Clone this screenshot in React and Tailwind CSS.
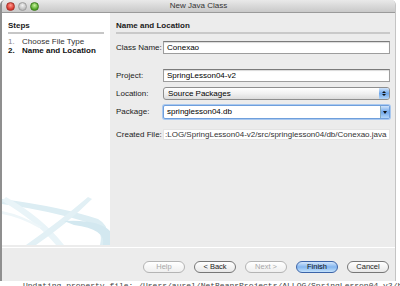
import React from "react";

const Field = ({ children, className = "" }) => (
  <div
    className={
      "h-[13px] flex items-center px-[3px] bg-white border border-[#9d9d9d] border-t-[#7b7b7b] shadow-[inset_0_1px_1px_rgba(0,0,0,0.15)] " +
      className
    }
  >
    {children}
  </div>
);

const Row = ({ label, children, className = "" }) => (
  <div className={"flex items-center " + className}>
    <div className="w-[47px] shrink-0 text-[#1a1a1a]">{label}</div>
    <div className="flex-1">{children}</div>
  </div>
);

const Btn = ({ children, disabled, primary }) => {
  let cls =
    "h-[12px] w-[42px] rounded-full flex items-center justify-center border text-[7.5px] ";
  if (primary)
    cls +=
      "border-[#3c64a8] bg-gradient-to-b from-[#d4e6fb] via-[#84b6ef] to-[#c4e2fb] text-[#111]";
  else if (disabled)
    cls += "border-[#b4b4b4] bg-gradient-to-b from-white to-[#efefef] text-[#a8a8a8]";
  else cls += "border-[#777] bg-gradient-to-b from-white to-[#e8e8e8] text-[#222]";
  return <div className={cls}>{children}</div>;
};

const Wave = () => (
  <svg width="108" height="48" viewBox="0 0 108 48" className="block">
    <path d="M0 2 Q60 10 96 22 Q110 30 104 48 L98 48 Q102 30 88 26 Q50 14 0 7 Z" fill="#dcedf3" />
    <path d="M4 0 Q40 20 62 48 L54 48 Q34 24 0 4 Z" fill="#e9f4f8" />
    <path d="M86 0 Q58 24 24 48 L34 48 Q66 26 90 2 Z" fill="#e2f0f5" />
    <path d="M62 24 Q96 22 108 34 L108 48 L101 48 Q104 32 72 28 Z" fill="#d3e8f0" />
    <path d="M74 34 Q92 31 96 40 L91 41 Q88 36 76 37 Z" fill="#ffffff" />
    <path d="M0 14 Q20 18 40 30 L37 31 Q18 20 0 17 Z" fill="#eef6f9" />
  </svg>
);

export default function App() {
  return (
    <div
      className="w-[400px] h-[286px] overflow-hidden bg-white text-[8px] leading-none"
      style={{ fontFamily: '"Liberation Sans", Arial, sans-serif' }}
    >
      <div className="w-[396px] h-[281px] flex flex-col rounded-t-[5px] overflow-hidden border-l-2 border-[#8f8f8f] bg-[#ececec] border-r border-r-[#c4c4c4]">
        {/* title bar */}
        <div className="h-[13px] shrink-0 flex items-center relative bg-gradient-to-b from-[#e9e9e9] to-[#c9c9c9] border-b border-[#9a9a9a]">
          <div className="flex gap-[3px] pl-[4px]">
            <div className="w-[9px] h-[9px] rounded-full bg-[radial-gradient(circle_at_50%_35%,#ff9a8e,#d8332a_70%)] border border-[#a3322a]" />
            <div className="w-[9px] h-[9px] rounded-full bg-[radial-gradient(circle_at_50%_35%,#f2f2f2,#bdbdbd_70%)] border border-[#9c9c9c]" />
            <div className="w-[9px] h-[9px] rounded-full bg-[radial-gradient(circle_at_50%_35%,#c8f29c,#4da423_70%)] border border-[#3f7d1f]" />
          </div>
          <div className="absolute inset-0 flex items-center justify-center text-[#333] text-[8px]">
            New Java Class
          </div>
        </div>

        {/* content */}
        <div className="h-[232px] shrink-0 flex">
          <div className="w-[108px] bg-white flex flex-col">
            <div className="px-[6px] pt-[9px]">
              <div className="font-bold text-[#1a1a1a] pb-[2px]">Steps</div>
              <div className="h-[2px] bg-[#c6c6c6]" />
              <div className="mt-[4px] flex text-[#888]">
                <span className="w-[14px]">1.</span>
                <span className="text-[#333]">Choose File Type</span>
              </div>
              <div className="mt-[1px] flex font-bold text-[#111]">
                <span className="w-[14px]">2.</span>
                <span>Name and Location</span>
              </div>
            </div>
            <div className="mt-auto">
              <Wave />
            </div>
          </div>

          <div className="flex-1 px-[6px] pt-[9px] pr-[5px]">
            <div className="font-bold text-[#1a1a1a] pb-[2px]">Name and Location</div>
            <div className="h-[2px] bg-[#c9c9c9]" />

            <Row label="Class Name:" className="mt-[7px]">
              <Field>Conexao</Field>
            </Row>

            <Row label="Project:" className="mt-[15px]">
              <Field>SpringLesson04-v2</Field>
            </Row>

            <Row label="Location:" className="mt-[5px]">
              <div className="h-[13px] flex items-center rounded-[3px] border border-[#8e8e8e] bg-gradient-to-b from-white via-[#f1f1f1] to-[#dcdcdc] pl-[4px]">
                <span className="flex-1">Source Packages</span>
                <div className="w-[10px] h-[11px] rounded-r-[2px] bg-gradient-to-b from-[#cfe3fa] via-[#6fa7ea] to-[#b4d6f8] flex flex-col items-center justify-center gap-[1px]">
                  <div className="w-0 h-0 border-l-[2px] border-r-[2px] border-b-[2px] border-l-transparent border-r-transparent border-b-[#111]" />
                  <div className="w-0 h-0 border-l-[2px] border-r-[2px] border-t-[2px] border-l-transparent border-r-transparent border-t-[#111]" />
                </div>
              </div>
            </Row>

            <Row label="Package:" className="mt-[5px]">
              <div className="h-[14px] flex items-center rounded-[2px] border border-[#6f9fdc] shadow-[0_0_0_1px_#a9c8ef] bg-white pl-[3px]">
                <span className="flex-1">springlesson04.db</span>
                <div className="w-[9px] h-[12px] bg-gradient-to-b from-[#cfe3fa] via-[#6fa7ea] to-[#b4d6f8] flex items-center justify-center border-l border-[#8ab]">
                  <div className="w-0 h-0 border-l-[2px] border-r-[2px] border-t-[3px] border-l-transparent border-r-transparent border-t-[#111]" />
                </div>
              </div>
            </Row>

            <Row label="Created File:" className="mt-[10px]">
              <div className="h-[11px] flex items-center px-[1px] bg-white border border-[#e4e4e4] whitespace-nowrap overflow-hidden text-[#333]">
                :LOG/SpringLesson04-v2/src/springlesson04/db/Conexao.java
              </div>
            </Row>
          </div>
        </div>

        {/* separator */}
        <div className="mt-[2px] h-px bg-[#cfcfcf] border-b border-white" />

        {/* buttons */}
        <div className="flex-1 flex items-start justify-end gap-[9px] pr-[6px] pt-[13px]">
          <Btn disabled>Help</Btn>
          <Btn>&lt; Back</Btn>
          <Btn disabled>Next &gt;</Btn>
          <Btn primary>Finish</Btn>
          <Btn>Cancel</Btn>
        </div>
      </div>

      <div className="flex items-start h-[5px] overflow-hidden pl-[12px]">
        <div className="w-[2px] h-[5px] bg-[#999]" />
        <div className="ml-[3px] w-[8px] h-[5px] bg-[#b59a9a]" />
        <div
          className="ml-[8px] mt-[1px] text-[8px] text-[#444] whitespace-nowrap"
          style={{ fontFamily: '"Liberation Mono", monospace' }}
        >
          Updating property file: /Users/aurel/NetBeansProjects/ALLOG/SpringLesson04-v2/build
        </div>
      </div>
    </div>
  );
}
